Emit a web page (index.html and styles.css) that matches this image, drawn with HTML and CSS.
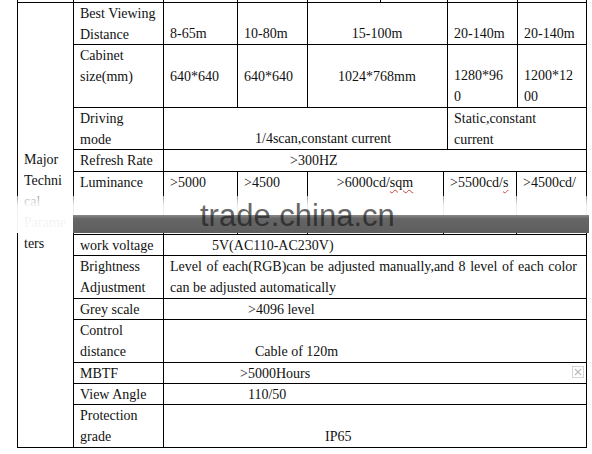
FILE: index.html
```html
<!DOCTYPE html>
<html>
<head>
<meta charset="utf-8">
<link rel="stylesheet" href="styles.css">
</head>
<body>
<div class="page">
  <div class="sheet">
    <div class="row r0">
      <div class="c w56"></div><div class="c w90"></div><div class="c w74"></div><div class="c w70"></div><div class="c w73"></div><div class="c w67"></div><div class="c w70"></div><div class="c w69"></div>
    </div>
    <div class="main">
      <div class="major"><span>Major<br>Techni<br>cal<br>Parame<br>ters</span></div>
      <div class="rows">
        <div class="row h42">
          <div class="c w90 top"><span>Best Viewing<br>Distance</span></div>
          <div class="c w74 bot"><span>8-65m</span></div>
          <div class="c w70 bot"><span>10-80m</span></div>
          <div class="c w140 bot ctr"><span>15-100m</span></div>
          <div class="c w70 bot"><span>20-140m</span></div>
          <div class="c w69 bot"><span>20-140m</span></div>
        </div>
        <div class="row h63">
          <div class="c w90 top"><span>Cabinet<br>size(mm)</span></div>
          <div class="c w74 mid"><span>640*640</span></div>
          <div class="c w70 mid"><span>640*640</span></div>
          <div class="c w140 mid ctr"><span>1024*768mm</span></div>
          <div class="c w70 bot"><span>1280*96<br>0</span></div>
          <div class="c w69 bot"><span>1200*12<br>00</span></div>
        </div>
        <div class="row h42">
          <div class="c w90 top"><span>Driving<br>mode</span></div>
          <div class="c w284 bot pl91"><span>1/4scan,constant current</span></div>
          <div class="c w139 top"><span>Static,constant<br>current</span></div>
        </div>
        <div class="row h22">
          <div class="c w90 top"><span>Refresh Rate</span></div>
          <div class="c w423 top pl126"><span>&gt;300HZ</span></div>
        </div>
        <div class="row h63">
          <div class="c w90 top"><span>Luminance</span></div>
          <div class="c w74 top"><span>&gt;5000</span></div>
          <div class="c w70 top"><span>&gt;4500</span></div>
          <div class="c w136 top ctr"><span>&gt;6000cd/<em class="spell">sqm</em></span></div>
          <div class="c w73 top"><span>&gt;5500cd/<em class="spell">s</em></span></div>
          <div class="c w70 top"><span>&gt;4500cd/</span></div>
        </div>
        <div class="row h21">
          <div class="c w90 top"><span>work voltage</span></div>
          <div class="c w423 top pl48"><span>5V(AC110-AC230V)</span></div>
        </div>
        <div class="row h43">
          <div class="c w90 top"><span>Brightness<br>Adjustment</span></div>
          <div class="c w423 top pr9"><span class="just">Level  of each(RGB)can be adjusted manually,and 8 level of each color</span><span>can be adjusted automatically</span></div>
        </div>
        <div class="row h21">
          <div class="c w90 top"><span>Grey scale</span></div>
          <div class="c w423 top pl84"><span>&gt;4096 level</span></div>
        </div>
        <div class="row h43">
          <div class="c w90 top"><span>Control<br>distance</span></div>
          <div class="c w423 bot pl91"><span>Cable of 120m</span></div>
        </div>
        <div class="row h21">
          <div class="c w90 top"><span>MBTF</span></div>
          <div class="c w423 top pl76"><span>&gt;5000Hours</span></div>
        </div>
        <div class="row h21">
          <div class="c w90 top"><span>View Angle</span></div>
          <div class="c w423 top pl84"><span>110/50</span></div>
        </div>
        <div class="row h43">
          <div class="c w90 top"><span>Protection<br>grade</span></div>
          <div class="c w423 bot pl161"><span>IP65</span></div>
        </div>
      </div>
    </div>
  </div>

  <svg class="wm" width="592" height="40" viewBox="0 0 592 40">
    <defs>
      <linearGradient id="bandg" x1="0" y1="0" x2="0" y2="1">
        <stop offset="0" stop-color="#8a8a8a"/>
        <stop offset="0.2" stop-color="#666"/>
        <stop offset="1" stop-color="#5e5e5e"/>
      </linearGradient>
      <linearGradient id="fadeg" x1="0" y1="0" x2="0" y2="1">
        <stop offset="0" stop-color="#fff" stop-opacity="0.6"/>
        <stop offset="0.25" stop-color="#fff" stop-opacity="0.93"/>
        <stop offset="1" stop-color="#fff" stop-opacity="0.96"/>
      </linearGradient>
    </defs>
    <rect x="0" y="0" width="592" height="37" fill="url(#fadeg)"/>
    <rect x="73" y="19" width="516" height="18" fill="url(#bandg)"/>
  </svg>
  <div class="wm-text">trade.china.cn</div>
  <div class="close-btn">
    <svg width="12" height="12" viewBox="0 0 12 12"><rect x="0.5" y="0.5" width="11" height="11" fill="#fff" stroke="#d6d6d6"/><path d="M3 3 L9 9 M9 3 L3 9" stroke="#bdbdbd" stroke-width="1.2"/></svg>
  </div>
</div>
</body>
</html>
```
FILE: styles.css
```css
html, body {
  margin: 0;
  padding: 0;
  background: #fff;
  overflow: hidden;
}

.page {
  position: relative;
  width: 592px;
  height: 454px;
  overflow: hidden;
  font-family: "Liberation Serif", "Times New Roman", serif;
  font-size: 14px;
  line-height: 21px;
  color: #111;
}

.sheet {
  margin-left: 17px;
  width: 570px;
  border-left: 1px solid #000;
  box-sizing: border-box;
}

.row {
  display: flex;
  border-bottom: 1px solid #000;
  box-sizing: border-box;
}

.r0 { height: 3px; }
.h21 { height: 21px; }
.h22 { height: 22px; }
.h42 { height: 42px; }
.h43 { height: 43px; }
.h63 { height: 63px; }

.main {
  display: flex;
}

.major {
  width: 56px;
  flex: none;
  box-sizing: border-box;
  border-right: 1px solid #000;
  border-bottom: 1px solid #000;
  padding: 146px 0 0 6px;
}
.major span { display: block; }

.rows {
  width: 513px;
  flex: none;
}

.c {
  flex: none;
  box-sizing: border-box;
  border-right: 1px solid #000;
  padding: 0 7px 0 6px;
  display: flex;
  flex-direction: column;
  white-space: nowrap;
}

.top { justify-content: flex-start; }
.mid { justify-content: center; }
.bot { justify-content: flex-end; }
.ctr { text-align: center; }

.w56 { width: 56px; }
.w67 { width: 67px; }
.w69 { width: 69px; }
.w70 { width: 70px; }
.w73 { width: 73px; }
.w74 { width: 74px; }
.w90 { width: 90px; }
.w136 { width: 136px; }
.w139 { width: 139px; }
.w140 { width: 140px; }
.w284 { width: 284px; }
.w423 { width: 423px; }

.pl48 { padding-left: 48px; }
.pl76 { padding-left: 76px; }
.pl84 { padding-left: 84px; }
.pl91 { padding-left: 91px; }
.pl126 { padding-left: 126px; }
.pl161 { padding-left: 161px; }
.pr9 { padding-right: 9px; }

.just {
  white-space: normal;
  text-align: justify;
  text-align-last: justify;
}

.spell {
  font-style: normal;
  text-decoration: underline wavy #d04040;
  text-decoration-thickness: 1px;
  text-underline-offset: 2px;
}

/* watermark */
.wm {
  position: absolute;
  left: 0;
  top: 196px;
  display: block;
}

.wm-text {
  position: absolute;
  left: 200px;
  top: 200px;
  font-family: "Liberation Sans", Arial, sans-serif;
  font-size: 31px;
  line-height: 31px;
  color: rgba(25, 25, 25, 0.68);
  white-space: nowrap;
}

.close-btn {
  position: absolute;
  left: 572px;
  top: 366px;
  width: 12px;
  height: 12px;
  line-height: 0;
}
```
